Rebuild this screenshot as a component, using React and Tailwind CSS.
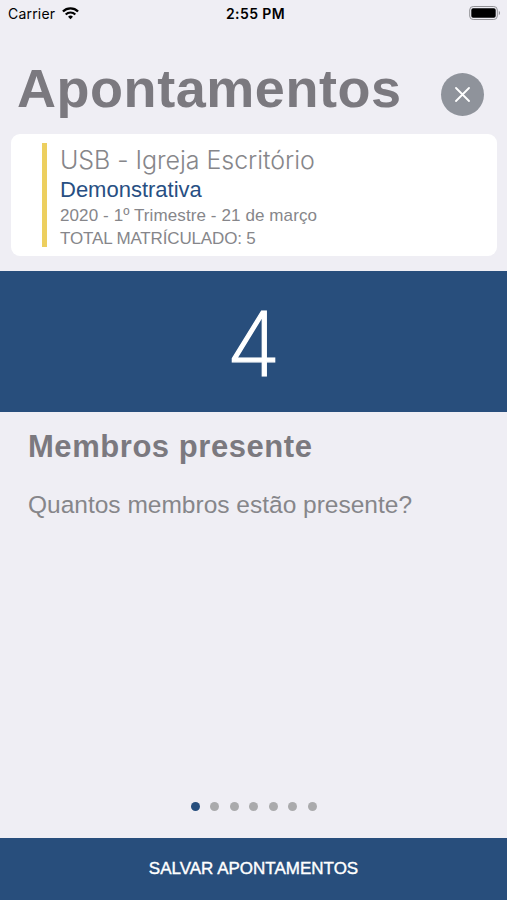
import React from "react";

const card = {
  title: "USB - Igreja Escritório",
  subtitle: "Demonstrativa",
  period: "2020 - 1º Trimestre - 21 de março",
  total: "TOTAL MATRÍCULADO: 5",
};

const PAGES = 7;

const StatusBar = () => (
  <div className="h-7 shrink-0 pl-2 pr-1.5 pb-0.5 grid grid-cols-3 items-center text-black text-[14px] font-['Inter',sans-serif]">
    <div className="flex items-center gap-[7px]">
      <span className="tracking-[0.2px]">Carrier</span>
      <svg width="17" height="13" viewBox="0 0 18 13" fill="none" stroke="#000">
        <path d="M1 4.400a11.400 11.400 0 0 1 16 0" strokeWidth="2.500" />
        <path d="M3.900 7.500a7.300 7.300 0 0 1 10.200 0" strokeWidth="2.300" />
        <path d="M9 12.600 6.400 10a3.700 3.700 0 0 1 5.200 0Z" fill="#000" stroke="none" />
      </svg>
    </div>
    <span className="pl-0.5 text-center font-semibold tracking-[0.4px] whitespace-nowrap">2:55 PM</span>
    <div className="flex justify-end">
      <svg width="32" height="14" viewBox="0 0 32 14">
        <rect x="0.7" y="0.5" width="27.600" height="13" rx="3.500" fill="none" stroke="#929296" />
        <rect x="2.300" y="2.200" width="24.400" height="9.600" rx="1.800" fill="#000" />
        <path d="M29.800 4.800c1.700.7 1.700 3.700 0 4.400Z" fill="#929296" />
      </svg>
    </div>
  </div>
);

const App = () => {
  return (
    <div className="w-full h-screen flex flex-col overflow-hidden bg-[#efeef4] text-[#86868a] font-['Liberation_Sans',Arial,sans-serif]">
      <StatusBar />

      {/* Title */}
      <header className="h-[106px] shrink-0 pl-[17px] pr-[23px] flex items-center justify-between">
        <h1 className="mt-3.5 text-[54px] leading-none font-bold tracking-[0.55px] whitespace-nowrap text-[#7b797f]">
          Apontamentos
        </h1>
        <button className="w-[43px] h-[43px] mt-[26px] rounded-full bg-[#8f939b] flex items-center justify-center">
          <svg width="15" height="15" viewBox="0 0 15 15" stroke="#fff" strokeWidth="1.8" strokeLinecap="round">
            <path d="M1 1l13 13M14 1L1 14" />
          </svg>
        </button>
      </header>

      {/* Unit card */}
      <section className="h-[122px] shrink-0 ml-[11px] mr-2.5 pl-[31px] py-[9px] flex gap-[13px] rounded-[9px] bg-white whitespace-nowrap">
        <div className="w-[5px] bg-[#edcf5f]" />
        <div>
          <p className="pt-px text-[25px] leading-8 font-light tracking-[-0.05px] font-['Inter',sans-serif]">{card.title}</p>
          <p className="text-[22px] leading-7 text-[#284f83]">{card.subtitle}</p>
          <p className="text-[17px] leading-6 tracking-[0.1px]">{card.period}</p>
          <p className="text-[17px] leading-[22px] tracking-[-0.15px]">{card.total}</p>
        </div>
      </section>

      {/* Counter */}
      <section className="h-[140.5px] shrink-0 mt-[15px] pt-[5px] flex items-center justify-center bg-[#284e7c] text-white">
        <span className="text-[89px] leading-none font-extralight font-['Inter',sans-serif] [-webkit-text-stroke:1.2px_white]">4</span>
      </section>

      <main className="flex-1 px-7 pt-[15px] whitespace-nowrap">
        <h2 className="text-[31px] leading-10 font-bold tracking-[0.55px] text-[#7b797f]">Membros presente</h2>
        <p className="mt-[22px] text-[24.5px] leading-8">Quantos membros estão presente?</p>
      </main>

      {/* Page dots */}
      <div className="h-[62px] shrink-0 pb-0.5 flex items-center justify-center gap-[10.5px]">
        {Array.from({ length: PAGES }, (_, i) => (
          <span key={i} className={`w-[9px] h-[9px] rounded-full ${i === 0 ? "bg-[#264e7d]" : "bg-[#aaaaac]"}`} />
        ))}
      </div>

      <button className="h-[62px] shrink-0 bg-[#284e7c] text-white text-[17px] [-webkit-text-stroke:0.4px_white]">
        SALVAR APONTAMENTOS
      </button>
    </div>
  );
};

export default App;
